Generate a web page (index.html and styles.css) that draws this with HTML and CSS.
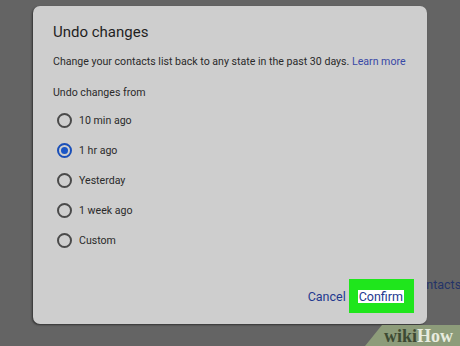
FILE: index.html
```html
<!DOCTYPE html>
<html>
<head>
<meta charset="utf-8">
<link rel="stylesheet" href="styles.css">
</head>
<body>
<div class="backdrop-text">Contacts</div>
<div class="dialog">
  <h1 class="title">Undo changes</h1>
  <p class="desc">Change your contacts list back to any state in the past 30 days. <span class="link">Learn more</span></p>
  <p class="sub">Undo changes from</p>
  <ul class="options">
    <li class="opt"><span class="radio"></span>10 min ago</li>
    <li class="opt"><span class="radio on"></span>1 hr ago</li>
    <li class="opt"><span class="radio"></span>Yesterday</li>
    <li class="opt"><span class="radio"></span>1 week ago</li>
    <li class="opt"><span class="radio"></span>Custom</li>
  </ul>
  <div class="actions">
    <span class="btn">Cancel</span>
    <span class="confirm-wrap"><span class="btn confirm">Confirm</span></span>
  </div>
</div>
<div class="wm"><span class="wiki">wiki</span><span class="how">How</span></div>
</body>
</html>
```
FILE: styles.css
```css
html, body { margin: 0; padding: 0; }
body {
  width: 460px; height: 346px; overflow: hidden;
  background: #646464;
  font-family: Roboto, "Liberation Sans", sans-serif;
  position: relative;
}
.backdrop-text {
  position: absolute; left: 411px; top: 277px;
  font-size: 12.5px; color: #243468; line-height: 16px;
}
.dialog {
  position: relative;
  margin: 6px 0 0 33px;
  width: 394px; height: 318px;
  box-sizing: border-box;
  background: #cecece;
  border-radius: 7px;
  box-shadow: -1px 1px 2px rgba(0,0,0,0.5);
  padding: 17px 20px 0 20px;
  display: flex; flex-direction: column;
}
.title { margin: 0; font-size: 15px; font-weight: 400; color: #1f1f1f; line-height: 18px; }
.desc { margin: 14px 0 0; font-size: 10.6px; color: #2a2a2a; line-height: 14px; }
.link { color: #3848a6; }
.sub { margin: 17px 0 0; font-size: 10.6px; color: #2a2a2a; line-height: 14px; }
.options { list-style: none; margin: 5px 0 0; padding: 0 0 0 4px; }
.opt { display: flex; align-items: center; gap: 7px; height: 30px; font-size: 10.6px; color: #2a2a2a; }
.radio {
  width: 11px; height: 11px; border: 2px solid #4a4a4a; border-radius: 50%;
  display: inline-flex; align-items: center; justify-content: center; flex: none;
}
.radio.on { border-color: #1a4fb8; }
.radio.on::after { content: ""; width: 7px; height: 7px; border-radius: 50%; background: #1a56c6; }
.actions { margin-top: auto; margin-bottom: 11px; display: flex; justify-content: flex-end; align-items: center; gap: 3px; margin-right: -7px; }
.btn { font-size: 12.5px; color: #23398f; }
.confirm-wrap { background: #1fe61c; padding: 11px 10px 10px 9px; display: inline-flex; }
.confirm { background: #fff; padding: 0 1px; line-height: 13px; }
.wm {
  position: absolute; right: 0; bottom: 0;
  width: 95px; height: 21px;
  background: #8d9c7a;
  clip-path: polygon(17px 0, 100% 0, 100% 100%, 0 100%);
  font-family: "Liberation Serif", serif; font-weight: bold; font-size: 18px;
  padding-left: 19px; box-sizing: border-box; line-height: 22px; white-space: nowrap;
}
.wiki { color: #3d4a33; }
.how { color: #e8ecdf; }
```
